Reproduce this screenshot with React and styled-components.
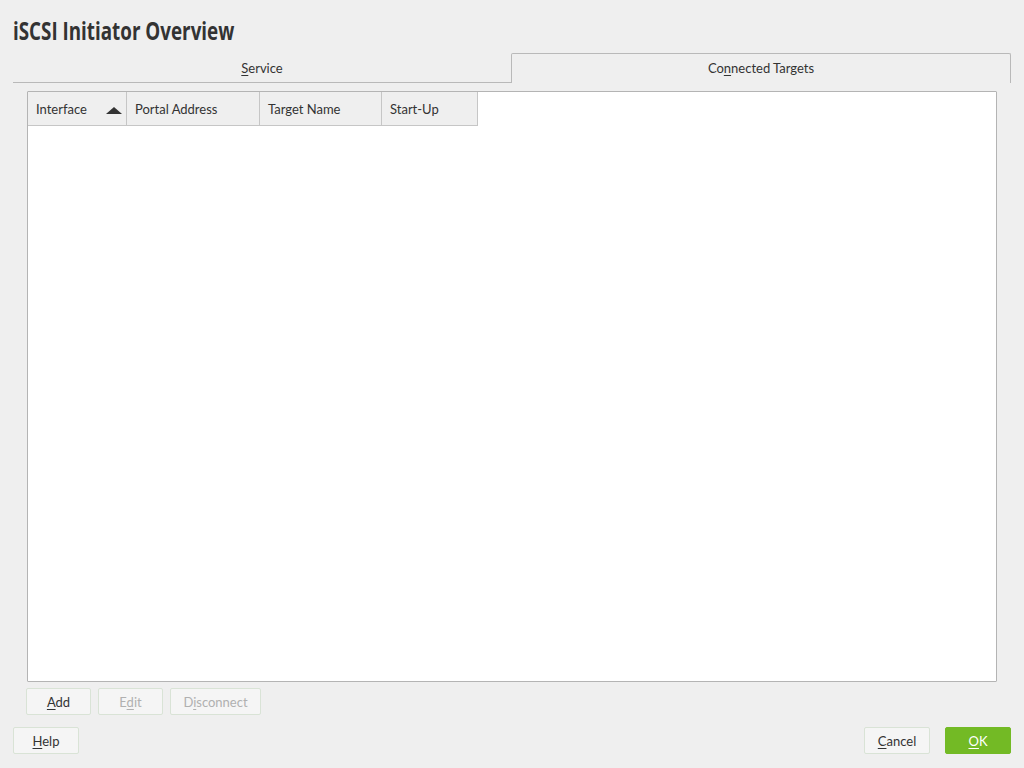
import React from 'react';
import styled, { createGlobalStyle } from 'styled-components';

const GlobalStyle = createGlobalStyle`
  html, body {
    margin: 0;
    padding: 0;
    background: #efefef;
  }
  body {
    font-family: "Source Sans Pro", Lato, "Noto Sans", sans-serif;
    color: #333;
  }
`;

const Page = styled.div`
  width: 1024px;
  height: 768px;
  box-sizing: border-box;
  padding: 14px 13px 14px 13px;
  display: flex;
  flex-direction: column;
  overflow: hidden;
`;

const Title = styled.h1`
  margin: 0;
  height: 33px;
  font-family: "Open Sans", sans-serif;
  font-weight: 700;
  font-size: 25px;
  line-height: 33px;
  color: #333;
  white-space: nowrap;
  transform: scaleX(0.752);
  transform-origin: left center;
`;

const TabBar = styled.div`
  display: flex;
  margin-top: 6px;
  height: 30px;
`;

const Tab = styled.div`
  flex: 1;
  display: flex;
  align-items: center;
  justify-content: center;
  font-size: 13px;
  color: #333;
  box-sizing: border-box;
  border-bottom: ${({ active }) => (active ? 'none' : '1px solid #b9b9b9')};
  border-top: ${({ active }) => (active ? '1px solid #b9b9b9' : 'none')};
  border-left: ${({ active }) => (active ? '1px solid #b9b9b9' : 'none')};
  border-right: ${({ active }) => (active ? '1px solid #b9b9b9' : 'none')};
  border-radius: ${({ active }) => (active ? '2px 2px 0 0' : '0')};
  padding: ${({ active }) => (active ? '0 0 1px' : '1px 0 0')};
`;

const Mnemonic = styled.u`
  text-decoration: underline;
  text-underline-offset: 2px;
`;

const TabBody = styled.div`
  flex: 1;
  display: flex;
  flex-direction: column;
  padding: 8px 14px 0 14px;
  min-height: 0;
`;

const TableBox = styled.div`
  flex: 1;
  background: #fff;
  border: 1px solid #b4b4b4;
  border-radius: 1px;
`;

const HeaderRow = styled.div`
  display: flex;
  height: 34px;
`;

const HeaderCell = styled.div`
  width: ${({ w }) => w}px;
  box-sizing: border-box;
  display: flex;
  align-items: center;
  justify-content: space-between;
  padding: 0 4px 0 8px;
  background: #efefef;
  border-right: 1px solid #c6c6c6;
  border-bottom: 1px solid #c6c6c6;
  font-size: 13px;
  color: #333;
`;

const SortArrow = styled.span`
  width: 0;
  height: 0;
  border-left: 8px solid transparent;
  border-right: 8px solid transparent;
  border-bottom: 7px solid #333;
  margin-top: 4px;
`;

const ActionRow = styled.div`
  display: flex;
  gap: 7px;
  margin-top: 6px;
  margin-left: -1px;
`;

const Button = styled.button`
  width: ${({ w }) => w || 66}px;
  height: 27px;
  box-sizing: border-box;
  background: ${({ primary }) => (primary ? '#73ba25' : '#f5f5f5')};
  border: 1px solid ${({ primary }) => (primary ? '#73ba25' : '#d9e3d6')};
  border-radius: 2px;
  font-family: "Source Sans Pro", Lato, "Noto Sans", sans-serif;
  font-size: 13px;
  color: ${({ primary, disabled }) =>
    primary ? '#fff' : disabled ? '#b0b0b0' : '#333'};
  padding: 0;
  cursor: default;
`;

const Footer = styled.div`
  display: flex;
  align-items: center;
  margin-top: 12px;
  gap: 15px;
`;

const Spacer = styled.div`
  flex: 1;
`;

const columns = [
  { label: 'Interface', w: 99, sort: true },
  { label: 'Portal Address', w: 133 },
  { label: 'Target Name', w: 122 },
  { label: 'Start-Up', w: 96 },
];

const App = () => {
  return (
    <>
      <GlobalStyle />
      <Page>
        <Title>iSCSI Initiator Overview</Title>
        <TabBar>
          <Tab>
            <span>
              <Mnemonic>S</Mnemonic>ervice
            </span>
          </Tab>
          <Tab active>
            <span>
              Co<Mnemonic>n</Mnemonic>nected Targets
            </span>
          </Tab>
        </TabBar>
        <TabBody>
          <TableBox>
            <HeaderRow>
              {columns.map((c) => (
                <HeaderCell key={c.label} w={c.w}>
                  {c.label}
                  {c.sort && <SortArrow />}
                </HeaderCell>
              ))}
            </HeaderRow>
          </TableBox>
          <ActionRow>
            <Button w={65}>
              <Mnemonic>A</Mnemonic>dd
            </Button>
            <Button disabled w={65}>
              E<Mnemonic>d</Mnemonic>it
            </Button>
            <Button disabled w={91}>
              D<Mnemonic>i</Mnemonic>sconnect
            </Button>
          </ActionRow>
        </TabBody>
        <Footer>
          <Button>
            <Mnemonic>H</Mnemonic>elp
          </Button>
          <Spacer />
          <Button>
            <Mnemonic>C</Mnemonic>ancel
          </Button>
          <Button primary>
            <Mnemonic>O</Mnemonic>K
          </Button>
        </Footer>
      </Page>
    </>
  );
};

export default App;
